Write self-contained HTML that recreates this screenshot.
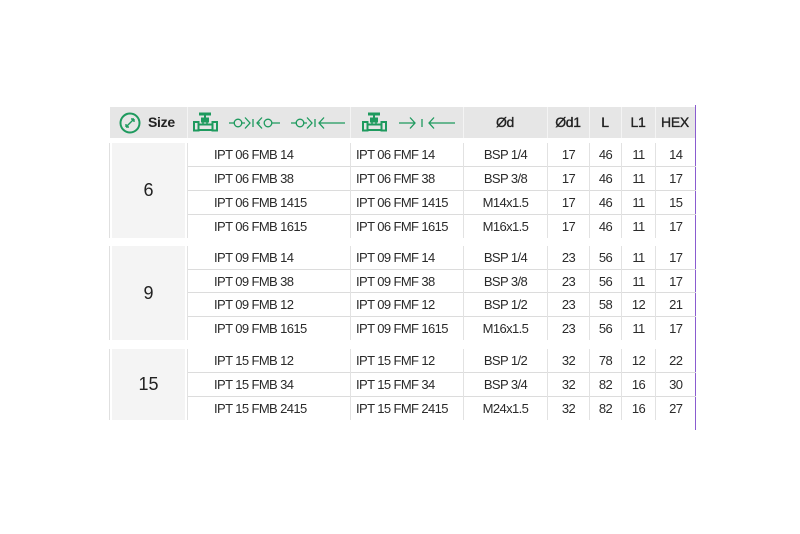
<!DOCTYPE html>
<html><head><meta charset="utf-8"><style>
body{margin:0;width:800px;height:534px;background:#fff;position:relative;font-family:"Liberation Sans",sans-serif;color:#222;overflow:hidden}
.hdr{position:absolute;left:110px;top:107px;width:585px;height:31px;background:#e6e6e6}
.hc{position:absolute;top:0;height:31px;line-height:31px;text-align:center;font-size:14px;letter-spacing:-0.3px;color:#222;-webkit-text-stroke:0.35px #222}
.hs{position:absolute;top:0;width:1px;height:31px;background:#f4f4f4}
.g{position:absolute;left:187px;border-collapse:collapse;table-layout:fixed;font-size:13px;letter-spacing:-0.6px;color:#2a2a2a}
.g td{border-left:1px solid #e2e2e2;border-top:1px solid #dcdcdc;padding:0;text-align:center;white-space:nowrap;overflow:hidden}
.g tr:first-child td{border-top:none}
.g td.a{text-align:left;padding-left:26px}
.g td.b{text-align:left;padding-left:5px}
.sz{position:absolute;left:112px;width:73px;background:#f4f4f4;font-size:18px;text-align:center;color:#222}
.ll{position:absolute;left:109px;width:1px;background:#e0e0e0}
.pl{position:absolute;left:695px;top:105px;width:1px;height:325px;background:#8a5cd0}
</style></head><body>
<div class="hdr">
 <svg style="position:absolute;left:9px;top:5px" width="22" height="22" viewBox="0 0 22 22"><circle cx="11" cy="11" r="9.5" fill="none" stroke="#1e9a5e" stroke-width="2"/><path d="M7 15L15 7M7 15v-3M7 15h3M15 7h-3M15 7v3" stroke="#1e9a5e" stroke-width="1.4" fill="none"/></svg>
 <div class="hc" style="left:38px;width:30px;text-align:left;font-weight:bold;-webkit-text-stroke:0">Size</div>
 <div class="hs" style="left:77px"></div>
 <svg style="position:absolute;left:77px;top:0" width="275" height="31" viewBox="187 107 275 31">
  <g fill="none" stroke="#1e9a5e" stroke-width="1.3">
   <g id="v"><rect x="199" y="112.5" width="12" height="3" fill="#1e9a5e" stroke="none"/><path d="M205 115v3" stroke-width="2"/><rect x="201" y="117.5" width="8" height="5" fill="#1e9a5e" stroke="none"/><rect x="194" y="122" width="4.5" height="8.5" stroke-width="2"/><rect x="212.5" y="122" width="4.5" height="8.5" stroke-width="2"/><path d="M198.5 124.5h14M198.5 130h14" stroke-width="2"/><path d="M203 122v3M207 122v3" stroke-width="1.5"/></g>
   <path d="M229 123h6M241 123h4M245 117.5l5 5.5l-5 5.5M253 119v8M262 117.5l-5 5.5l5 5.5M257 123h3M272 123h8"/><circle cx="238" cy="123" r="3.8"/><circle cx="268" cy="123" r="3.8"/>
   <path d="M291 123h6M303 123h4M307 117.5l5 5.5l-5 5.5M315 119v8M324 117.5l-5 5.5l5 5.5M319 123h26"/><circle cx="300" cy="123" r="3.8"/>
   <use href="#v" transform="translate(169 0)"/>
   <path d="M399 123h16M410 117.5l5 5.5l-5 5.5M422 119v8M434 117.5l-5 5.5l5 5.5M429 123h26"/>
  </g>
 </svg>
 <div class="hs" style="left:240px"></div>
 <div class="hs" style="left:353px"></div>
 <div class="hc" style="left:353px;width:84px">Ød</div>
 <div class="hs" style="left:437px"></div>
 <div class="hc" style="left:437px;width:42px">Ød1</div>
 <div class="hs" style="left:479px"></div>
 <div class="hc" style="left:479px;width:32px">L</div>
 <div class="hs" style="left:511px"></div>
 <div class="hc" style="left:511px;width:34px">L1</div>
 <div class="hs" style="left:545px"></div>
 <div class="hc" style="left:545px;width:40px">HEX</div>
</div>
<div class="pl"></div>

<div class="ll" style="top:143px;height:95px"></div>
<div class="sz" style="top:143px;height:95px;line-height:95px">6</div>
<table class="g" style="top:143px;height:95px;width:508px">
<colgroup><col style="width:163px"><col style="width:113px"><col style="width:84px"><col style="width:42px"><col style="width:32px"><col style="width:34px"><col style="width:40px"></colgroup>
<tr><td class="a">IPT 06 FMB 14</td><td class="b">IPT 06 FMF 14</td><td>BSP 1/4</td><td>17</td><td>46</td><td>11</td><td>14</td></tr>
<tr><td class="a">IPT 06 FMB 38</td><td class="b">IPT 06 FMF 38</td><td>BSP 3/8</td><td>17</td><td>46</td><td>11</td><td>17</td></tr>
<tr><td class="a">IPT 06 FMB 1415</td><td class="b">IPT 06 FMF 1415</td><td>M14x1.5</td><td>17</td><td>46</td><td>11</td><td>15</td></tr>
<tr><td class="a">IPT 06 FMB 1615</td><td class="b">IPT 06 FMF 1615</td><td>M16x1.5</td><td>17</td><td>46</td><td>11</td><td>17</td></tr>
</table>

<div class="ll" style="top:246px;height:94px"></div>
<div class="sz" style="top:246px;height:94px;line-height:94px">9</div>
<table class="g" style="top:246px;height:94px;width:508px">
<colgroup><col style="width:163px"><col style="width:113px"><col style="width:84px"><col style="width:42px"><col style="width:32px"><col style="width:34px"><col style="width:40px"></colgroup>
<tr><td class="a">IPT 09 FMB 14</td><td class="b">IPT 09 FMF 14</td><td>BSP 1/4</td><td>23</td><td>56</td><td>11</td><td>17</td></tr>
<tr><td class="a">IPT 09 FMB 38</td><td class="b">IPT 09 FMF 38</td><td>BSP 3/8</td><td>23</td><td>56</td><td>11</td><td>17</td></tr>
<tr><td class="a">IPT 09 FMB 12</td><td class="b">IPT 09 FMF 12</td><td>BSP 1/2</td><td>23</td><td>58</td><td>12</td><td>21</td></tr>
<tr><td class="a">IPT 09 FMB 1615</td><td class="b">IPT 09 FMF 1615</td><td>M16x1.5</td><td>23</td><td>56</td><td>11</td><td>17</td></tr>
</table>

<div class="ll" style="top:349px;height:71px"></div>
<div class="sz" style="top:349px;height:71px;line-height:71px">15</div>
<table class="g" style="top:349px;height:71px;width:508px">
<colgroup><col style="width:163px"><col style="width:113px"><col style="width:84px"><col style="width:42px"><col style="width:32px"><col style="width:34px"><col style="width:40px"></colgroup>
<tr><td class="a">IPT 15 FMB 12</td><td class="b">IPT 15 FMF 12</td><td>BSP 1/2</td><td>32</td><td>78</td><td>12</td><td>22</td></tr>
<tr><td class="a">IPT 15 FMB 34</td><td class="b">IPT 15 FMF 34</td><td>BSP 3/4</td><td>32</td><td>82</td><td>16</td><td>30</td></tr>
<tr><td class="a">IPT 15 FMB 2415</td><td class="b">IPT 15 FMF 2415</td><td>M24x1.5</td><td>32</td><td>82</td><td>16</td><td>27</td></tr>
</table>
</body></html>
